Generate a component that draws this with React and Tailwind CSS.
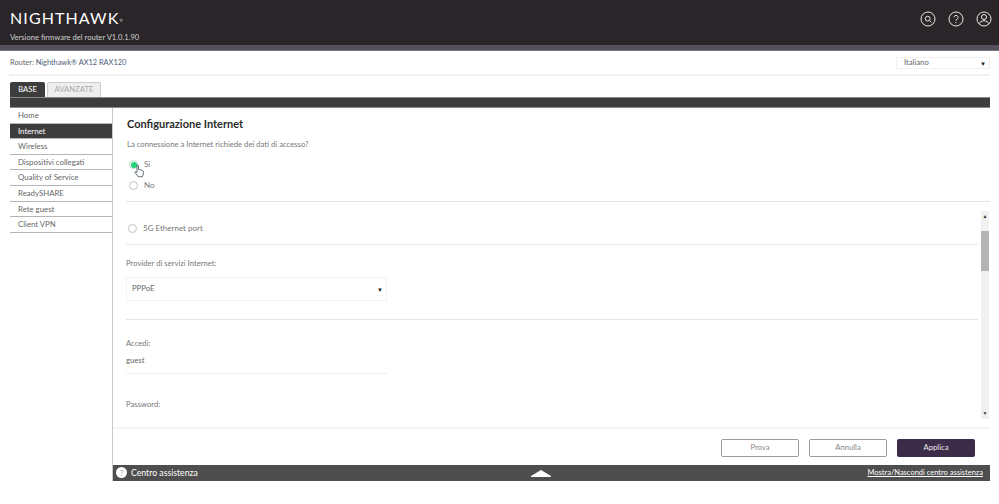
const menu = ['Home', 'Internet', 'Wireless', 'Dispositivi collegati', 'Quality of Service', 'ReadySHARE', 'Rete guest', 'Client VPN'];

function Radio({ checked, label }) {
  return (
    <label className="flex items-center gap-[6px] text-[8px] leading-[13px] text-[#777]">
      <span className={`flex h-[9px] w-[9px] items-center justify-center rounded-full border ${checked ? 'border-[#b5dcc4]' : 'border-[#c4c4c4]'}`}>
        {checked && <span className="h-[6px] w-[6px] rounded-full bg-[#22d477]" />}
      </span>
      <span>{label}</span>
    </label>
  );
}

function HeaderIcon({ children }) {
  return (
    <svg className="h-[16px] w-[16px]" viewBox="0 0 16 16" fill="none" stroke="#e8e8e8" strokeWidth="1">
      <circle cx="8" cy="8" r="7" />
      {children}
    </svg>
  );
}

export default function App() {
  return (
    <div className="h-[504px] w-[999px] overflow-hidden bg-white font-['Lato',sans-serif] text-[#666]">
      <header className="flex h-[45px] justify-between bg-[#2a2529] pl-[10px] pr-[7px]">
        <div>
          <div className="mt-[9px] text-[16px] leading-[18px] tracking-[1.1px] text-white">NIGHTHAWK<sup className="text-[4px]">®</sup></div>
          <div className="mt-[5px] text-[7.6px] leading-[10px] text-[#cfcfcf]">Versione firmware del router V1.0.1.90</div>
        </div>
        <div className="mt-[11px] flex gap-[12px]">
          <HeaderIcon>
            <circle cx="7.7" cy="7.7" r="2.4" />
            <path d="M9.5 9.5l1.8 1.8" />
          </HeaderIcon>
          <HeaderIcon>
            <path d="M6 6.3a2 2 0 1 1 3 1.8c-.7.4-1 .8-1 1.6" />
            <path d="M8 11v1" />
          </HeaderIcon>
          <HeaderIcon>
            <circle cx="8" cy="6" r="2.5" />
            <path d="M3.2 12.8c.8-2 2.6-3 4.8-3s4 1 4.8 3" />
          </HeaderIcon>
        </div>
      </header>
      <div className="h-[6px] border-b border-[#777] bg-[#55505a]" />

      <div className="mx-[9px] flex h-[25px] items-center justify-between border-b-2 border-[#f1f1f1] pl-px pt-px">
        <div className="text-[7.4px]">Router: <span className="text-[#4c5c78]">Nighthawk® AX12 RAX120</span></div>
        <div className="flex h-[12px] w-[94px] items-center justify-between border border-[#f1f1f1] pl-[7px] pr-[3px] text-[7.7px]">
          <span>Italiano</span>
          <span className="text-[6px] text-[#222]">▼</span>
        </div>
      </div>

      <div className="ml-[10px] mr-[9px] mt-[6px]">
        <div className="flex h-[15px] items-end gap-[2px]">
          <div className="flex h-[15px] w-[35px] items-center justify-center rounded-t-[2px] bg-[#3d3d3d] text-[7.7px] text-white">BASE</div>
          <div className="flex h-[15px] w-[54px] items-center justify-center rounded-t-[2px] border border-b-0 border-[#ccc] bg-[#eee] text-[7.7px] text-[#aaa]">AVANZATE</div>
        </div>
        <div className="h-[11px] border-y border-[#888] bg-[#3d3d3d]" />

        <div className="flex">
          <nav className="w-[102px] shrink-0">
            {menu.map((item) => (
              <div
                key={item}
                className={`flex h-[15.6px] items-center border-b border-[#b5b5b5] pl-[8px] pt-px text-[7.8px] ${item === 'Internet' ? 'bg-[#3d3d3d] text-white' : 'text-[#666]'}`}
              >
                {item}
              </div>
            ))}
          </nav>

          <main className="h-[373px] min-w-0 flex-1 border-l border-[#c8c8c8]">
            <div className="pl-[14px] pt-[9px]">
              <h1 className="text-[11px] font-bold leading-[14px] text-[#2b2b2b]">Configurazione Internet</h1>
              <p className="mt-[8px] text-[7.7px] leading-[10px] text-[#777]">La connessione a Internet richiede dei dati di accesso?</p>
              <div className="relative mt-[9px] flex flex-col gap-[8px] pl-[2px]">
                <Radio checked label="Sì" />
                <Radio label="No" />
                <svg className="absolute left-[7px] top-[6px] h-[14px] w-[11px]" viewBox="0 0 11 14" fill="white" stroke="#3b4a5a" strokeWidth="0.8">
                  <path d="M3 1.2c.6-.6 1.4-.3 1.4.5v4l.9-.2 3.2.9c.8.3 1.1.9 1 1.7l-.5 3.2-.6 1.4H4.2L1 8.6c-.4-.7.2-1.3 1-.9l1 .8z" />
                </svg>
              </div>
            </div>

            <div className="ml-[13px] mt-[9px] border-t border-[#e6e6e6]" />

            <div className="mt-[9px] flex h-[208px]">
              <div className="min-w-0 flex-1 overflow-hidden pl-[13px]">
                <div className="mr-[3px]">
                  <div className="pl-[2px] pt-[11px]">
                    <Radio label="5G Ethernet port" />
                  </div>
                  <div className="mt-[9px] border-t border-[#e6eaea]" />
                  <p className="mt-[13px] text-[7.7px] leading-[10px] text-[#777]">Provider di servizi Internet:</p>
                  <div className="mt-[9px] flex h-[24px] w-[261px] items-center justify-between border border-[#f3f3f3] pl-[5px] pr-[3px] text-[7.7px]">
                    <span>PPPoE</span>
                    <span className="text-[6px] text-[#222]">▼</span>
                  </div>
                  <div className="mt-[18px] border-t border-[#e6e6e6]" />
                  <p className="mt-[18px] text-[7.7px] leading-[10px] text-[#777]">Accedi:</p>
                  <div className="mt-[7px] h-[19px] w-[261px] border-b border-[#eee] text-[7.7px] leading-[10px]">guest</div>
                  <p className="mt-[25px] text-[7.7px] leading-[10px] text-[#777]">Password:</p>
                </div>
              </div>
              <div className="mr-px flex w-[8px] shrink-0 flex-col bg-[#f1f1f1]">
                <div className="flex h-[11px] items-center justify-center text-[5px] text-[#333]">▲</div>
                <div className="mt-[9px] h-[40px] bg-[#b4b4b4]" />
                <div className="flex-1" />
                <div className="flex h-[11px] items-center justify-center text-[5px] text-[#333]">▼</div>
              </div>
            </div>

            <div className="mt-[8px] h-[2px] bg-[#f5f5f5]" />
            <div className="mt-[10px] flex justify-end gap-[10px] pr-[15px] text-[7.7px]">
              <button className="h-[18px] w-[78px] rounded-[2px] border border-[#9a9aa2] bg-white text-[#888]">Prova</button>
              <button className="h-[18px] w-[78px] rounded-[2px] border border-[#9a9aa2] bg-white text-[#888]">Annulla</button>
              <button className="h-[18px] w-[78px] rounded-[2px] bg-[#3d2b4a] text-[#e8e8e8]">Applica</button>
            </div>
            <div className="mt-[8px] flex h-[16px] items-center bg-[#4e4e4e] pl-[3px] pr-[7px] text-white">
              <div className="flex w-[415px] items-center gap-[4px] text-[8.7px]">
                <span className="flex h-[11px] w-[11px] items-center justify-center rounded-full bg-white text-[7px] text-[#999]">?</span>
                Centro assistenza
              </div>
              <svg className="h-[7px] w-[20px]" viewBox="0 0 20 7" fill="white">
                <path d="M10 0l10 6v1H0V6z" />
              </svg>
              <span className="ml-auto text-[7.5px] underline">Mostra/Nascondi centro assistenza</span>
            </div>
          </main>
        </div>
      </div>
    </div>
  );
}
